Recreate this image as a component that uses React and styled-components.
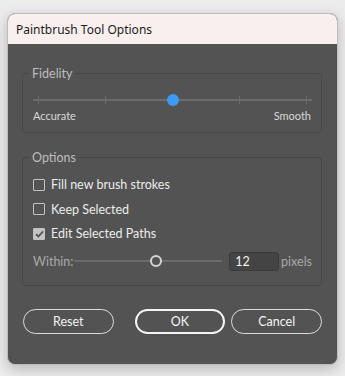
import React, { useState } from "react";
import styled, { createGlobalStyle } from "styled-components";

const GlobalStyle = createGlobalStyle`
  html, body {
    margin: 0;
    padding: 0;
    background: #ececec;
    font-family: "Lato", "Open Sans", sans-serif;
  }
  * { box-sizing: border-box; }
`;

const Page = styled.div`
  width: 345px;
  height: 376px;
  padding: 13px 7px 11px 7px;
`;

const Window = styled.div`
  width: 331px;
  height: 352px;
  border-radius: 8px;
  overflow: hidden;
  background: #535353;
  border: 1px solid #bdbdbd;
  box-shadow: 0 4px 14px rgba(0, 0, 0, 0.22);
  display: flex;
  flex-direction: column;
`;

const TitleBar = styled.div`
  height: 30px;
  flex: none;
  background: #f9efef;
  color: #1b1b1b;
  font-family: "Noto Sans", "Open Sans", sans-serif;
  font-size: 12px;
  display: flex;
  align-items: center;
  padding-left: 8px;
`;

const Body = styled.div`
  display: flex;
  flex-direction: column;
  padding: 22px 15px 0 14px;
`;

const Group = styled.fieldset`
  margin: 0;
  border: 1px solid #474747;
  border-radius: 3px;
  padding: ${(p) => p.$pad};
  margin-bottom: ${(p) => p.$mb || 0}px;
  min-width: 0;
`;

const Legend = styled.legend`
  font-size: 12.5px;
  color: #bdbdbd;
  padding: 0 2px;
  margin-left: -3px;
  line-height: 15px;
`;

const Slider = styled.div`
  position: relative;
  height: 14px;
  display: flex;
  align-items: center;
  width: ${(p) => p.$w}px;
  margin-left: ${(p) => p.$ml || 0}px;
`;

const Track = styled.div`
  flex: 1;
  height: 2px;
  background: #6b6b6b;
`;

const Ticks = styled.div`
  position: absolute;
  left: 5px;
  right: 5px;
  top: 3px;
  height: 8px;
  display: flex;
  justify-content: space-between;
`;

const Tick = styled.div`
  width: 1px;
  height: 8px;
  background: #6b6b6b;
`;

const Thumb = styled.div`
  position: absolute;
  top: 1px;
  left: ${(p) => p.$x}px;
  width: 12px;
  height: 12px;
  border-radius: 50%;
  background: ${(p) => (p.$hollow ? "#535353" : "#3c9af4")};
  border: ${(p) => (p.$hollow ? "2px solid #d4d4d4" : "none")};
`;

const Ends = styled.div`
  display: flex;
  justify-content: space-between;
  font-size: 11px;
  color: #d8d8d8;
  margin-top: 2px;
  padding-right: 1px;
`;

const Row = styled.label`
  display: flex;
  align-items: center;
  gap: 6px;
  height: 24.5px;
  font-size: 12.5px;
  color: #ececec;
  cursor: default;
`;

const Box = styled.span`
  width: 12px;
  height: 12px;
  border: 1px solid #c2c2c2;
  border-radius: 1px;
  background: ${(p) => (p.$on ? "#c3c3c3" : "transparent")};
  display: flex;
  align-items: center;
  justify-content: center;
`;

const WithinRow = styled.div`
  display: flex;
  align-items: center;
  margin-top: 5px;
  height: 20px;
  font-size: 12.5px;
  color: #a9a9a9;
`;

const Field = styled.div`
  width: 50px;
  height: 19px;
  margin-left: 7px;
  background: #444444;
  border: 1px solid #3b3b3b;
  border-radius: 3px;
  color: #f2f2f2;
  font-size: 12.5px;
  padding-left: 5px;
  display: flex;
  align-items: center;
`;

const Unit = styled.span`
  margin-left: 2px;
`;

const Buttons = styled.div`
  display: flex;
  margin-top: 23px;
  padding-left: 1px;
`;

const Button = styled.button`
  width: 91px;
  height: 25px;
  border-radius: 13px;
  background: transparent;
  border: ${(p) => (p.$primary ? "2px solid #f4f4f4" : "1.5px solid #dcdcdc")};
  color: #f4f4f4;
  font-family: "Lato", "Open Sans", sans-serif;
  font-size: 12.5px;
  margin-left: ${(p) => p.$ml || 0}px;
  cursor: pointer;
`;

function Check({ on, children, onToggle }) {
  return (
    <Row onClick={onToggle}>
      <Box $on={on}>
        {on && (
          <svg width="9" height="8" viewBox="0 0 9 8">
            <path d="M1 4.2 L3.4 6.5 L8 1.3" fill="none" stroke="#535353" strokeWidth="1.8" />
          </svg>
        )}
      </Box>
      {children}
    </Row>
  );
}

export default function App() {
  const [fill, setFill] = useState(false);
  const [keep, setKeep] = useState(false);
  const [edit, setEdit] = useState(true);

  return (
    <Page>
      <GlobalStyle />
      <Window>
        <TitleBar>Paintbrush Tool Options</TitleBar>
        <Body>
          <Group $pad="12px 9px 10px 10px" $mb={17}>
            <Legend>Fidelity</Legend>
            <Slider $w={279}>
              <Track />
              <Ticks>
                <Tick />
                <Tick />
                <Tick />
                <Tick />
                <Tick />
              </Ticks>
              <Thumb $x={134} />
            </Slider>
            <Ends>
              <span>Accurate</span>
              <span>Smooth</span>
            </Ends>
          </Group>
          <Group $pad="7.5px 9px 14px 10px">
            <Legend>Options</Legend>
            <Check on={fill} onToggle={() => setFill(!fill)}>Fill new brush strokes</Check>
            <Check on={keep} onToggle={() => setKeep(!keep)}>Keep Selected</Check>
            <Check on={edit} onToggle={() => setEdit(!edit)}>Edit Selected Paths</Check>
            <WithinRow>
              Within:
              <Slider $w={148} $ml={1}>
                <Track />
                <Thumb $x={76} $hollow />
              </Slider>
              <Field>12</Field>
              <Unit>pixels</Unit>
            </WithinRow>
          </Group>
          <Buttons>
            <Button>Reset</Button>
            <Button $primary $ml={21}>OK</Button>
            <Button $ml={6}>Cancel</Button>
          </Buttons>
        </Body>
      </Window>
    </Page>
  );
}
